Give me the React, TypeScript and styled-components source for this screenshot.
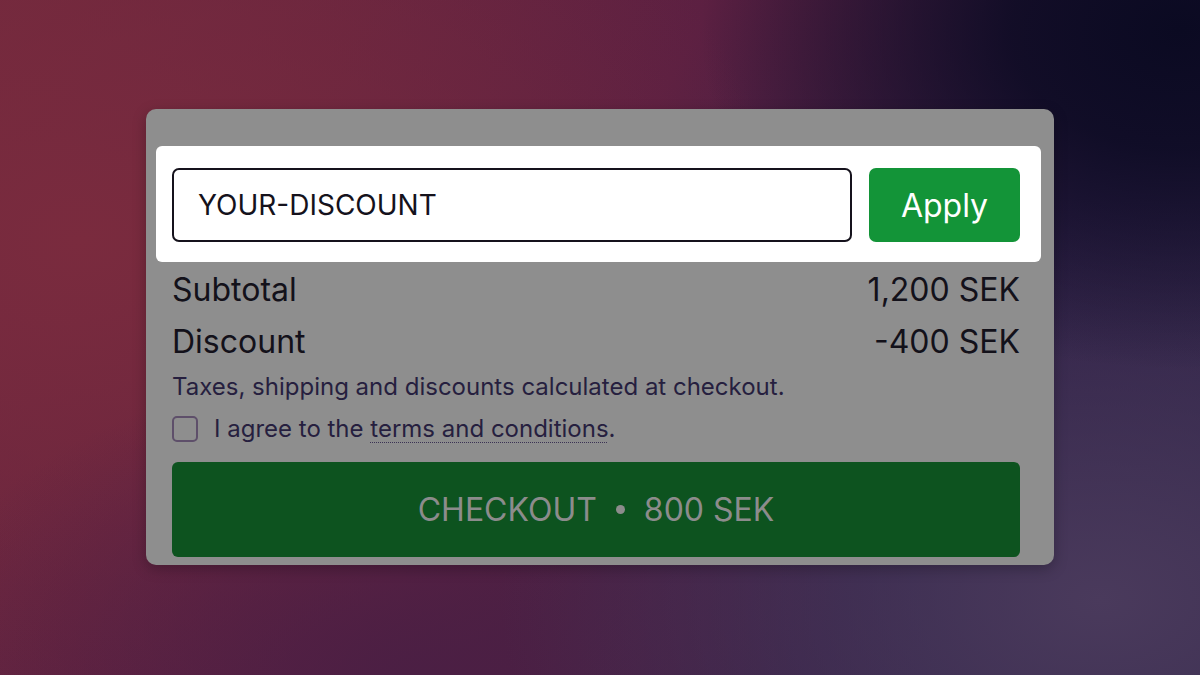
import styled, { createGlobalStyle } from 'styled-components';

const GlobalStyle = createGlobalStyle`
  html, body {
    margin: 0;
    padding: 0;
    width: 100%;
    height: 100%;
  }
  body {
    font-family: Inter, "Noto Sans", sans-serif;
  }
`;

const Backdrop = styled.div`
  width: 1200px;
  height: 675px;
  display: flex;
  justify-content: center;
  align-items: flex-start;
  padding-top: 109px;
  box-sizing: border-box;
  overflow: hidden;
  background:
    radial-gradient(ellipse 480px 340px at 1180px 30px, #0b0a22 0%, rgba(11, 10, 34, 0.85) 35%, rgba(11, 10, 34, 0) 100%),
    radial-gradient(ellipse 600px 400px at 1100px 600px, #4a3a5c 0%, rgba(74, 58, 92, 0) 100%),
    radial-gradient(ellipse 520px 320px at 420px 680px, #4b1f44 0%, rgba(75, 31, 68, 0) 100%),
    radial-gradient(ellipse 700px 500px at 80px 240px, #7a2b3e 0%, rgba(122, 43, 62, 0) 100%),
    linear-gradient(120deg, #6f283d 0%, #5c2042 45%, #2f1f46 75%, #302649 100%);
`;

const Card = styled.div`
  width: 908px;
  box-sizing: border-box;
  padding: 59px 34px 8px 26px;
  background: #8e8e8e;
  border-radius: 10px;
  box-shadow: 0 4px 14px rgba(0, 0, 0, 0.25);
  display: flex;
  flex-direction: column;
`;

const Spotlight = styled.div`
  margin: -22px -21px 0 -16px;
  padding: 22px 21px 20px 16px;
  background: #ffffff;
  border-radius: 6px;
  display: flex;
  gap: 17px;
`;

const CodeInput = styled.div`
  flex: 1;
  height: 74px;
  box-sizing: border-box;
  border: 2px solid #15121c;
  border-radius: 7px;
  display: flex;
  align-items: center;
  padding-left: 24px;
  font-size: 28px;
  color: #15121c;
`;

const ApplyButton = styled.button`
  width: 151px;
  height: 74px;
  border: none;
  border-radius: 7px;
  background: #139438;
  color: #ffffff;
  font-family: Inter, "Noto Sans", sans-serif;
  font-size: 32px;
  padding: 0;
`;

const SummaryRow = styled.div<{ $top: number }>`
  display: flex;
  justify-content: space-between;
  align-items: center;
  margin-top: ${(p) => p.$top}px;
  height: 40px;
  font-size: 32px;
  color: #13111a;
`;

const Note = styled.div`
  margin-top: 11px;
  font-size: 24px;
  color: #261f3f;
  line-height: 30px;
`;

const AgreeRow = styled.label`
  display: flex;
  align-items: center;
  gap: 16px;
  margin-top: 12px;
  font-size: 24px;
  color: #261f3f;
  line-height: 30px;
`;

const Box = styled.span`
  width: 22px;
  height: 22px;
  border: 2px solid #5e4f6a;
  border-radius: 5px;
  box-sizing: content-box;
`;

const Terms = styled.span`
  text-decoration: underline dotted #3b3354;
  text-decoration-thickness: 1px;
  text-underline-offset: 5px;
`;

const CheckoutButton = styled.button`
  margin-top: 18px;
  height: 95px;
  border: none;
  border-radius: 6px;
  background: #0d531f;
  color: #8c8c8c;
  font-family: Inter, "Noto Sans", sans-serif;
  font-size: 32px;
  display: flex;
  align-items: center;
  justify-content: center;
  gap: 19px;
`;

const Dot = styled.span`
  width: 9px;
  height: 9px;
  border-radius: 50%;
  background: #8c8c8c;
`;

const App = () => {
  return (
    <>
      <GlobalStyle />
      <Backdrop>
        <Card>
          <Spotlight>
            <CodeInput>YOUR-DISCOUNT</CodeInput>
            <ApplyButton>Apply</ApplyButton>
          </Spotlight>
          <SummaryRow $top={7}>
            <span>Subtotal</span>
            <span>1,200 SEK</span>
          </SummaryRow>
          <SummaryRow $top={12}>
            <span>Discount</span>
            <span>-400 SEK</span>
          </SummaryRow>
          <Note>Taxes, shipping and discounts calculated at checkout.</Note>
          <AgreeRow>
            <Box />
            <span>
              I agree to the <Terms>terms and conditions</Terms>.
            </span>
          </AgreeRow>
          <CheckoutButton>
            <span>CHECKOUT</span>
            <Dot />
            <span>800 SEK</span>
          </CheckoutButton>
        </Card>
      </Backdrop>
    </>
  );
};

export default App;
